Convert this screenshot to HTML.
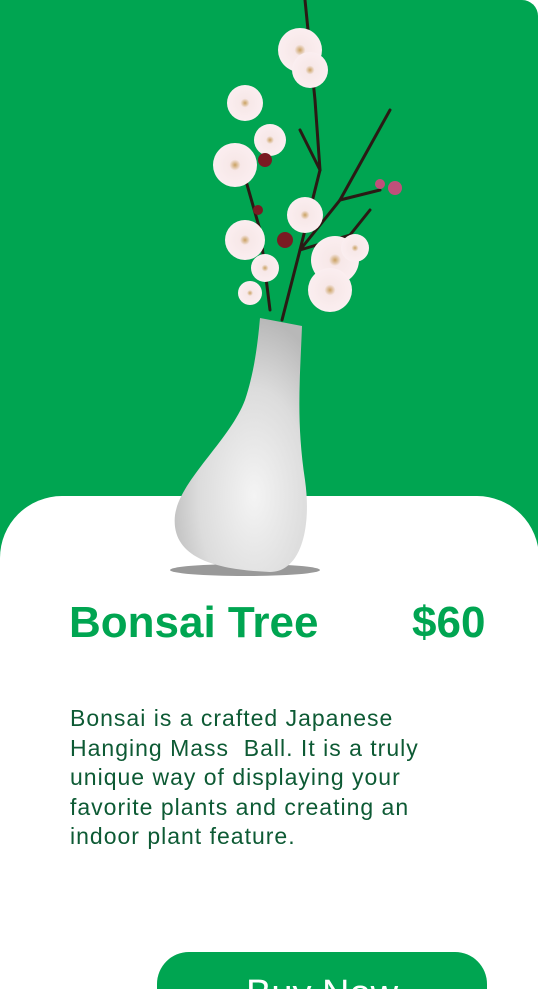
<!DOCTYPE html>
<html><head><style>
html,body{margin:0;padding:0;width:539px;height:989px;overflow:hidden;background:#fff;font-family:"Liberation Sans",sans-serif;}
.wrap{position:relative;width:539px;height:989px;overflow:hidden;}
.green{position:absolute;left:0;top:0;width:538px;height:600px;background:#00A551;border-top-right-radius:16px;}
.card{position:absolute;left:0;top:496px;width:539px;height:493px;background:#fff;border-radius:62px 62px 0 0;}
.t{position:absolute;color:#00A551;font-weight:bold;font-size:44px;top:598px;}
.desc{position:absolute;left:70px;top:704px;width:370px;font-size:23px;letter-spacing:1px;line-height:29.5px;color:#0d5a34;}
.btn{position:absolute;left:157px;top:952px;width:330px;height:37px;background:#00A551;border-radius:32px 32px 0 0;color:#fff;font-size:38px;text-align:center;line-height:84px;overflow:hidden;}
</style></head><body><div class="wrap">
<div class="green"></div>
<div class="card"></div>
<svg style="position:absolute;left:0;top:0" width="539" height="600">
<defs>
<radialGradient id="v" cx="0.6" cy="0.7" r="0.7"><stop offset="0" stop-color="#f4f4f4"/><stop offset="0.6" stop-color="#dcdcdc"/><stop offset="1" stop-color="#b8b8b8"/></radialGradient>
<radialGradient id="fl" cx="0.5" cy="0.5" r="0.5"><stop offset="0" stop-color="#c9a060"/><stop offset="0.25" stop-color="#f7e8e8"/><stop offset="1" stop-color="#fbeef0"/></radialGradient>
</defs>
<g stroke="#2a1a14" stroke-width="3" fill="none" stroke-linecap="round">
<path d="M282 320 L300 250 L320 170 L315 100 L305 0"/>
<path d="M300 250 L340 200 L390 110"/>
<path d="M340 200 L380 190"/>
<path d="M270 310 L260 230 L240 160"/>
<path d="M300 250 L350 235 L370 210"/>
<path d="M320 170 L300 130"/>
</g>
<ellipse cx="245" cy="570" rx="75" ry="6" fill="#333" opacity="0.5"/>
<path d="M260 318 L302 326 C300 380 296 420 305 480 C312 530 300 572 270 572 C220 570 170 560 175 515 C180 480 230 440 245 400 C255 370 258 340 260 318 Z" fill="url(#v)"/>
<g fill="url(#fl)">
<circle cx="300" cy="50" r="22"/><circle cx="310" cy="70" r="18"/><circle cx="245" cy="103" r="18"/>
<circle cx="235" cy="165" r="22"/><circle cx="270" cy="140" r="16"/><circle cx="245" cy="240" r="20"/>
<circle cx="305" cy="215" r="18"/><circle cx="335" cy="260" r="24"/><circle cx="330" cy="290" r="22"/>
<circle cx="265" cy="268" r="14"/><circle cx="250" cy="293" r="12"/><circle cx="355" cy="248" r="14"/>
</g>
<g fill="#7a1a22"><circle cx="265" cy="160" r="7"/><circle cx="285" cy="240" r="8"/><circle cx="258" cy="210" r="5"/><circle cx="395" cy="188" r="7" fill="#c0507a"/><circle cx="380" cy="184" r="5" fill="#c0507a"/></g>
</svg>
<div class="t" style="left:69px">Bonsai Tree</div>
<div class="t" style="left:412px">$60</div>
<div class="desc">Bonsai is a crafted Japanese Hanging Mass&nbsp; Ball. It is a truly unique way of displaying your favorite plants and creating an indoor plant feature.</div>
<div class="btn">Buy Now</div>
</div></body></html>
